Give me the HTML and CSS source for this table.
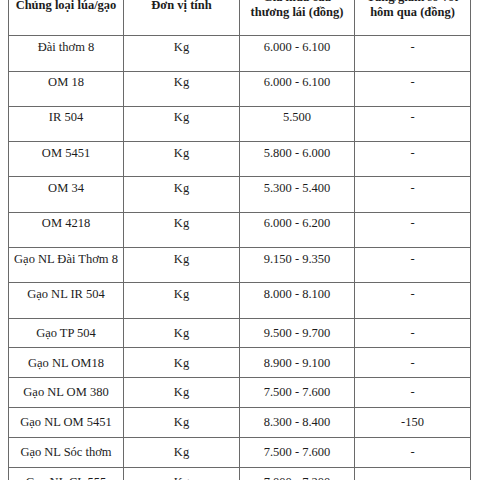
FILE: index.html
```html
<!DOCTYPE html>
<html lang="vi">
<head>
<meta charset="utf-8">
<link rel="stylesheet" href="styles.css">
</head>
<body>
<table class="price-table">
  <colgroup>
    <col class="c1"><col class="c2"><col class="c3"><col class="c4">
  </colgroup>
  <thead>
    <tr>
      <th>Chủng loại lúa/gạo</th>
      <th>Đơn vị tính</th>
      <th>Giá mua của<br>thương lái (đồng)</th>
      <th>Tăng/giảm so với<br>hôm qua (đồng)</th>
    </tr>
  </thead>
  <tbody>
    <tr class="tall"><td>Đài thơm 8</td><td>Kg</td><td>6.000 - 6.100</td><td>-</td></tr>
    <tr class="tall"><td>OM 18</td><td>Kg</td><td>6.000 - 6.100</td><td>-</td></tr>
    <tr class="tall"><td>IR 504</td><td>Kg</td><td>5.500</td><td>-</td></tr>
    <tr class="tall"><td>OM 5451</td><td>Kg</td><td>5.800 - 6.000</td><td>-</td></tr>
    <tr class="tall"><td>OM 34</td><td>Kg</td><td>5.300 - 5.400</td><td>-</td></tr>
    <tr class="tall"><td>OM 4218</td><td>Kg</td><td>6.000 - 6.200</td><td>-</td></tr>
    <tr class="tall"><td>Gạo NL Đài Thơm 8</td><td>Kg</td><td>9.150 - 9.350</td><td>-</td></tr>
    <tr class="tall"><td>Gạo NL IR 504</td><td>Kg</td><td>8.000 - 8.100</td><td>-</td></tr>
    <tr class="short"><td>Gạo TP 504</td><td>Kg</td><td>9.500 - 9.700</td><td>-</td></tr>
    <tr class="short"><td>Gạo NL OM18</td><td>Kg</td><td>8.900 - 9.100</td><td>-</td></tr>
    <tr class="short"><td>Gạo NL OM 380</td><td>Kg</td><td>7.500 - 7.600</td><td>-</td></tr>
    <tr class="short"><td>Gạo NL OM 5451</td><td>Kg</td><td>8.300 - 8.400</td><td>-150</td></tr>
    <tr class="short"><td>Gạo NL Sóc thơm</td><td>Kg</td><td>7.500 - 7.600</td><td>-</td></tr>
    <tr class="short"><td>Gạo NL CL 555</td><td>Kg</td><td>7.000 - 7.200</td><td>-</td></tr>
  </tbody>
</table>
</body>
</html>
```
FILE: styles.css
```css
html, body {
  background: #ffffff;
}
body {
  margin: 0 0 0 8px;
  overflow: hidden;
  font-family: "Liberation Serif", "Times New Roman", serif;
  font-size: 12.5px;
  color: #1c1c1c;
}
.price-table {
  border-collapse: collapse;
  table-layout: fixed;
  width: 463px;
  margin-top: -14.5px;
}
.c1 { width: 115px; }
.c2 { width: 116px; }
.c3 { width: 115px; }
.c4 { width: 116px; }
.price-table th,
.price-table td {
  border: 1px solid #6a6a6a;
  text-align: center;
  line-height: 15px;
  padding: 0 2px;
  white-space: nowrap;
  overflow: hidden;
}
.price-table th {
  font-weight: bold;
  padding-top: 3.5px;
  padding-bottom: 15.3px;
  vertical-align: middle;
}
.tall td {
  padding-top: 3.5px;
  padding-bottom: 15.8px;
  vertical-align: top;
}
.short td {
  padding-top: 7.2px;
  padding-bottom: 6.6px;
  vertical-align: top;
}
```
